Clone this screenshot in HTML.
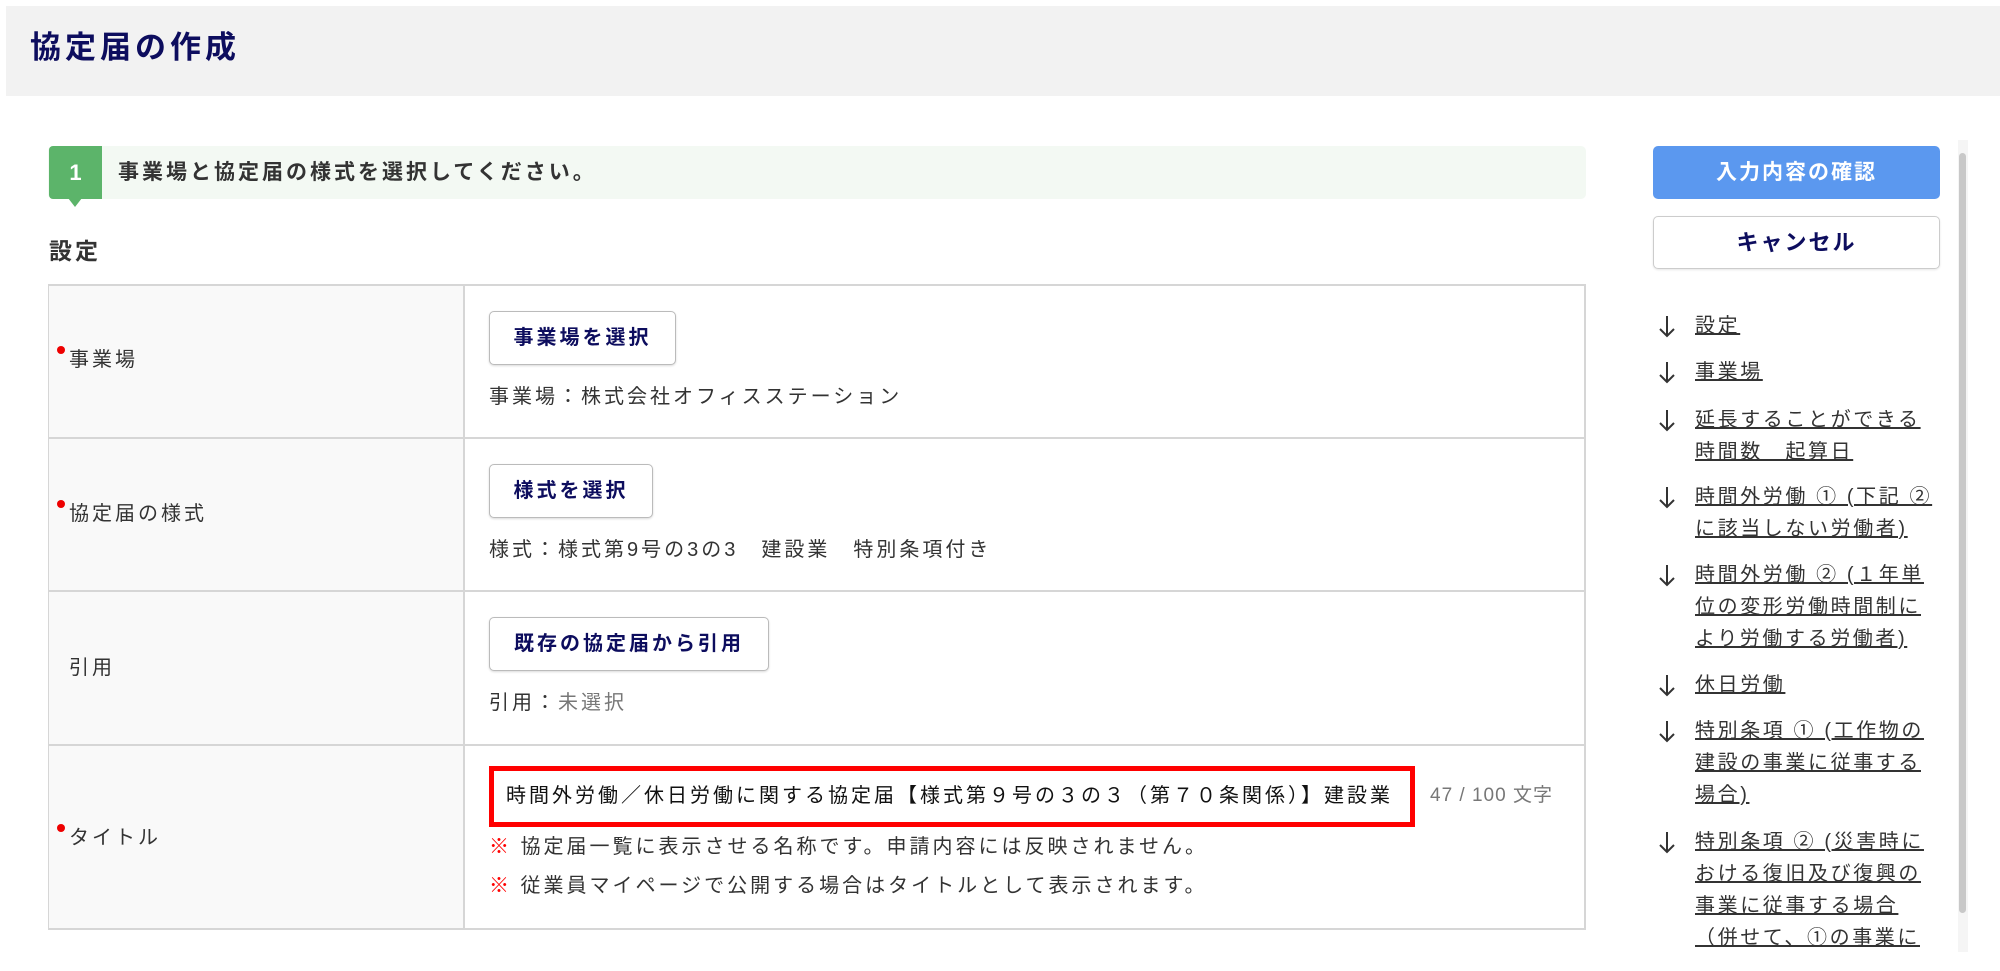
<!DOCTYPE html>
<html><head><meta charset="utf-8"><style>
*{margin:0;padding:0;box-sizing:border-box}
body{width:2000px;height:971px;overflow:hidden;background:#fff;font-family:"Liberation Sans","Noto Sans CJK JP",sans-serif;color:#333;position:relative}
.a{position:absolute;white-space:nowrap}
.hdr{left:6px;top:6px;width:1994px;height:90px;background:#f2f2f2}
.title{left:30px;top:28px;font-size:31px;font-weight:bold;color:#0d0d5e;line-height:40px;letter-spacing:4px}
.step{left:48px;top:146px;width:1538px;height:53px;background:#f3f9f3;border-radius:5px}
.num{left:49px;top:146px;width:53px;height:53px;background:#5cb46a;border-radius:4px 0 0 4px;color:#fff;font-weight:bold;font-size:22px;text-align:center;line-height:53px}
.tri{left:68px;top:198px;width:0;height:0;border-left:7px solid transparent;border-right:7px solid transparent;border-top:9px solid #5cb46a}
.steptxt{left:118px;top:146px;line-height:53px;font-size:21px;font-weight:bold;color:#333;letter-spacing:3px}
.set{left:49px;top:236px;font-size:23px;font-weight:bold;line-height:30px;letter-spacing:3px}
.tbl{left:48px;top:284px;width:1538px;height:646px;border:2px solid #d6d6d6;background:#fff}
.lab{left:49px;width:414px;background:#f9f9f9}
.hl{left:48px;width:1538px;height:2px;background:#d6d6d6}
.vl{left:463px;top:284px;width:2px;height:646px;background:#d6d6d6}
.lt{font-size:20px;line-height:28px;color:#333;letter-spacing:3px}
.dot{width:8px;height:8px;border-radius:50%;background:#e00}
.btn{border:1px solid #bbb;border-radius:5px;background:#fff;color:#0d0d5e;font-weight:bold;font-size:20px;text-align:center;line-height:52px;box-shadow:0 1px 2px rgba(0,0,0,.15);letter-spacing:3px}
.inp{left:489px;top:766px;width:926px;height:61px;border:5px solid #f00;font-size:20px;line-height:51px;padding-left:12px;overflow:hidden;color:#111;letter-spacing:3px}
.note{font-size:20px;line-height:28px;letter-spacing:3px}
.note b{color:#f00;font-weight:normal}
.blue{left:1653px;top:146px;width:287px;height:53px;background:#5b98ef;border-radius:5px;color:#fff;font-weight:bold;font-size:21px;text-align:center;line-height:53px;letter-spacing:2px}
.cancel{left:1653px;top:216px;width:287px;height:53px;border:1px solid #ccc;border-radius:5px;color:#0d0d5e;font-weight:bold;font-size:22px;text-align:center;line-height:51px;box-shadow:0 1px 2px rgba(0,0,0,.1);letter-spacing:2px}
.nav{left:1656px;font-size:20px;line-height:32px;color:#333;letter-spacing:2.6px}
.nav span{text-decoration:underline;position:absolute;left:39px;white-space:nowrap}
.ar{position:absolute;left:0;top:0;width:22px;height:32px}
.sb{left:1958px;top:140px;width:10px;height:812px;background:#f5f5f5}
.sbt{left:1959px;top:153px;width:7px;height:760px;background:#c8c8c8;border-radius:4px}
</style></head><body>
<div class="a hdr"></div>
<div class="a title">協定届の作成</div>
<div class="a step"></div>
<div class="a num">1</div>
<div class="a tri"></div>
<div class="a steptxt">事業場と協定届の様式を選択してください。</div>
<div class="a set">設定</div>
<div class="a tbl"></div>
<div class="a lab" style="top:286px;height:151px"></div>
<div class="a lab" style="top:439px;height:151px"></div>
<div class="a lab" style="top:592px;height:152px"></div>
<div class="a lab" style="top:746px;height:182px"></div>
<div class="a hl" style="top:437px"></div>
<div class="a hl" style="top:590px"></div>
<div class="a hl" style="top:744px"></div>
<div class="a vl"></div>

<div class="a dot" style="left:57px;top:346px"></div>
<div class="a lt" style="left:69px;top:346px">事業場</div>
<div class="a btn" style="left:489px;top:311px;width:187px;height:54px">事業場を選択</div>
<div class="a lt" style="left:489px;top:383px">事業場：株式会社オフィスステーション</div>

<div class="a dot" style="left:57px;top:500px"></div>
<div class="a lt" style="left:69px;top:500px">協定届の様式</div>
<div class="a btn" style="left:489px;top:464px;width:164px;height:54px">様式を選択</div>
<div class="a lt" style="left:489px;top:536px">様式：様式第9号の3の3　建設業　特別条項付き</div>

<div class="a lt" style="left:69px;top:654px">引用</div>
<div class="a btn" style="left:489px;top:617px;width:280px;height:54px">既存の協定届から引用</div>
<div class="a lt" style="left:489px;top:689px">引用：<span style="color:#777">未選択</span></div>

<div class="a dot" style="left:57px;top:824px"></div>
<div class="a lt" style="left:69px;top:824px">タイトル</div>
<div class="a inp">時間外労働／休日労働に関する協定届【様式第９号の３の３（第７０条関係）】建設業</div>
<div class="a" style="left:1430px;top:783px;font-size:19px;color:#777;line-height:26px;letter-spacing:1px">47 / 100 文字</div>
<div class="a note" style="left:489px;top:833px"><b>※</b> 協定届一覧に表示させる名称です。申請内容には反映されません。</div>
<div class="a note" style="left:489px;top:872px"><b>※</b> 従業員マイページで公開する場合はタイトルとして表示されます。</div>

<div class="a blue">入力内容の確認</div>
<div class="a cancel">キャンセル</div>
<div class="a sb"></div>
<div class="a sbt"></div>

<div style="position:absolute;left:0;top:0;width:2000px;height:952px;overflow:hidden">
<div class="a nav" style="top:310px"><svg class="ar" viewBox="0 0 22 32"><path d="M11 6v20M4 19l7 7 7-7" stroke="#333" stroke-width="2" fill="none"/></svg><span>設定</span></div>
<div class="a nav" style="top:356px"><svg class="ar" viewBox="0 0 22 32"><path d="M11 6v20M4 19l7 7 7-7" stroke="#333" stroke-width="2" fill="none"/></svg><span>事業場</span></div>
<div class="a nav" style="top:404px"><svg class="ar" viewBox="0 0 22 32"><path d="M11 6v20M4 19l7 7 7-7" stroke="#333" stroke-width="2" fill="none"/></svg><span>延長することができる<br>時間数　起算日</span></div>
<div class="a nav" style="top:481px"><svg class="ar" viewBox="0 0 22 32"><path d="M11 6v20M4 19l7 7 7-7" stroke="#333" stroke-width="2" fill="none"/></svg><span>時間外労働 ① (下記 ②<br>に該当しない労働者)</span></div>
<div class="a nav" style="top:559px"><svg class="ar" viewBox="0 0 22 32"><path d="M11 6v20M4 19l7 7 7-7" stroke="#333" stroke-width="2" fill="none"/></svg><span>時間外労働 ② (１年単<br>位の変形労働時間制に<br>より労働する労働者)</span></div>
<div class="a nav" style="top:669px"><svg class="ar" viewBox="0 0 22 32"><path d="M11 6v20M4 19l7 7 7-7" stroke="#333" stroke-width="2" fill="none"/></svg><span>休日労働</span></div>
<div class="a nav" style="top:715px"><svg class="ar" viewBox="0 0 22 32"><path d="M11 6v20M4 19l7 7 7-7" stroke="#333" stroke-width="2" fill="none"/></svg><span>特別条項 ① (工作物の<br>建設の事業に従事する<br>場合)</span></div>
<div class="a nav" style="top:826px"><svg class="ar" viewBox="0 0 22 32"><path d="M11 6v20M4 19l7 7 7-7" stroke="#333" stroke-width="2" fill="none"/></svg><span>特別条項 ② (災害時に<br>おける復旧及び復興の<br>事業に従事する場合<br>（併せて、①の事業に</span></div>
</div>
</body></html>
